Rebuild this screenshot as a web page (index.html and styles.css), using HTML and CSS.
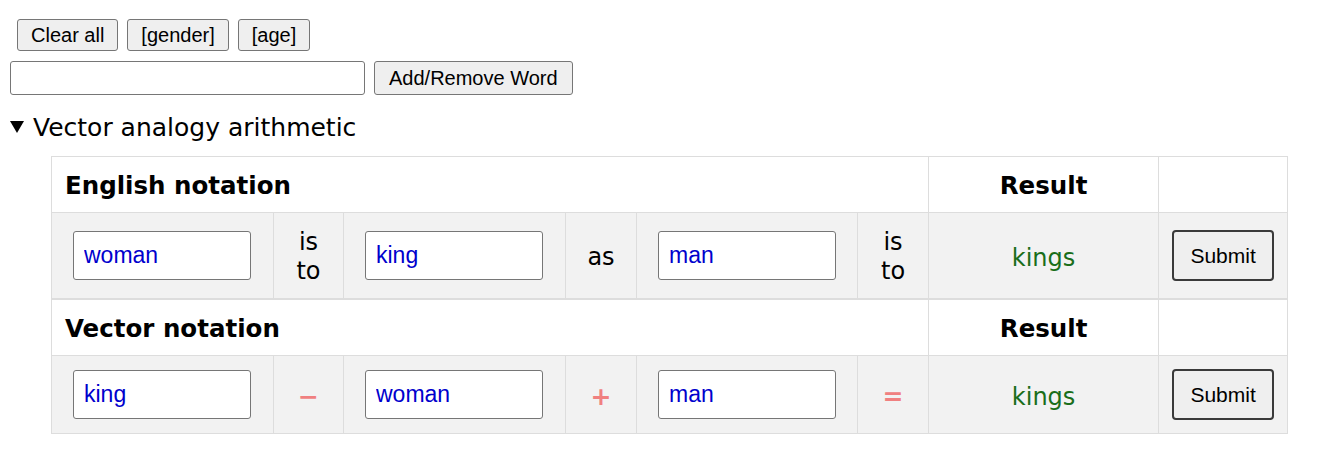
FILE: index.html
```html
<!DOCTYPE html>
<html>
<head>
<meta charset="utf-8">
<link rel="stylesheet" href="styles.css">
</head>
<body>
<div class="toolbar">
  <button class="btn">Clear all</button>
  <button class="btn">[gender]</button>
  <button class="btn">[age]</button>
</div>
<div class="wordbar">
  <input class="wordinput" type="text">
  <button class="btn">Add/Remove Word</button>
</div>
<details open class="analogy">
  <summary class="summary"><svg class="tri" width="14" height="14" viewBox="0 0 14 14"><polygon points="0,1 14,1 7,13" fill="#000"/></svg><span>Vector analogy arithmetic</span></summary>
  <table class="grid">
    <colgroup>
      <col class="c-in"><col class="c-op"><col class="c-in"><col class="c-op2"><col class="c-in2"><col class="c-op2"><col class="c-res"><col class="c-sub">
    </colgroup>
    <tr class="head">
      <th colspan="6" class="title">English notation</th>
      <th class="rescol">Result</th>
      <th></th>
    </tr>
    <tr class="data">
      <td class="incell"><input class="word" type="text" value="woman"></td>
      <td class="word-op">is to</td>
      <td class="incell"><input class="word" type="text" value="king"></td>
      <td class="word-op">as</td>
      <td class="incell"><input class="word" type="text" value="man"></td>
      <td class="word-op">is to</td>
      <td class="result">kings</td>
      <td class="subcell"><button class="submit">Submit</button></td>
    </tr>
  </table>
  <table class="grid">
    <colgroup>
      <col class="c-in"><col class="c-op"><col class="c-in"><col class="c-op2"><col class="c-in2"><col class="c-op2"><col class="c-res"><col class="c-sub">
    </colgroup>
    <tr class="head">
      <th colspan="6" class="title">Vector notation</th>
      <th class="rescol">Result</th>
      <th></th>
    </tr>
    <tr class="data data2">
      <td class="incell"><input class="word" type="text" value="king"></td>
      <td class="sym">&minus;</td>
      <td class="incell"><input class="word" type="text" value="woman"></td>
      <td class="sym">+</td>
      <td class="incell"><input class="word" type="text" value="man"></td>
      <td class="sym">=</td>
      <td class="result">kings</td>
      <td class="subcell"><button class="submit">Submit</button></td>
    </tr>
  </table>
</details>
</body>
</html>
```
FILE: styles.css
```css
html, body {
  margin: 0;
  padding: 0;
  background: #fff;
}
body {
  padding: 19px 10px 0 10px;
  font-family: "DejaVu Sans", Verdana, sans-serif;
  color: #000;
}
.toolbar {
  display: flex;
  gap: 9px;
  padding-left: 7px;
  height: 32px;
}
.btn {
  font-family: "Liberation Sans", Arial, sans-serif;
  font-size: 20px;
  height: 32px;
  padding: 0 13px;
  border: 1px solid #767676;
  border-radius: 3px;
  background: #efefef;
  color: #000;
  margin: 0;
}
.wordbar {
  display: flex;
  gap: 9px;
  margin-top: 10px;
  height: 34px;
}
.wordinput {
  width: 355px;
  height: 34px;
  box-sizing: border-box;
  border: 1px solid #767676;
  border-radius: 3px;
  margin: 0;
  padding: 0 6px;
}
.wordbar .btn {
  height: 34px;
  padding: 0 14px;
}
.analogy {
  margin-top: 16px;
}
.summary {
  list-style: none;
  display: flex;
  align-items: center;
  gap: 9px;
  font-size: 25px;
  height: 32px;
  cursor: pointer;
}
.summary::-webkit-details-marker { display: none; }
.tri { display: block; }
.grid {
  margin-left: 41px;
  border-collapse: collapse;
  table-layout: fixed;
  width: 1236px;
}
.analogy .grid:first-of-type { margin-top: 13px; }
.c-in { width: 222px; }
.c-op { width: 70px; }
.c-op2 { width: 71px; }
.c-in2 { width: 221px; }
.c-res { width: 230px; }
.c-sub { width: 129px; }
.grid th, .grid td {
  border: 1px solid #dddddd;
  padding: 0;
}
.head th {
  height: 53px;
  padding-top: 2px;
  font-size: 24.5px;
  font-weight: bold;
  background: #fff;
}
.head .title {
  text-align: left;
  padding-left: 13px;
}
.head .rescol { text-align: center; }
.data td {
  background: #f2f2f2;
  height: 85px;
  text-align: center;
  vertical-align: middle;
}
.data2 td { height: 77px; }
.incell { text-align: left !important; padding-left: 21px !important; }
.word {
  width: 178px;
  height: 49px;
  box-sizing: border-box;
  border: 1px solid #767676;
  border-radius: 3px;
  background: #fff;
  color: #0000cd;
  font-family: "Liberation Sans", Arial, sans-serif;
  font-size: 23px;
  padding: 0 10px;
  margin: 0;
  display: block;
}
.data .word-op {
  font-size: 24px;
  line-height: 29px;
  padding: 3px 14px 0 14px;
  height: 82px;
}
.data .sym {
  color: #f08080;
  font-weight: bold;
  font-size: 25px;
  padding-top: 3px;
  height: 74px;
}
.data .result {
  color: #1a6e1a;
  font-size: 24px;
  padding-top: 4px;
  height: 81px;
}
.data2 .result { height: 73px; }
.subcell { text-align: left !important; padding-left: 13px !important; }
.submit {
  width: 102px;
  height: 51px;
  border: 2px solid #3a3a3a;
  border-radius: 4px;
  background: #efefef;
  font-family: "Liberation Sans", Arial, sans-serif;
  font-size: 21px;
  color: #000;
  margin: 0;
  display: block;
}
```
